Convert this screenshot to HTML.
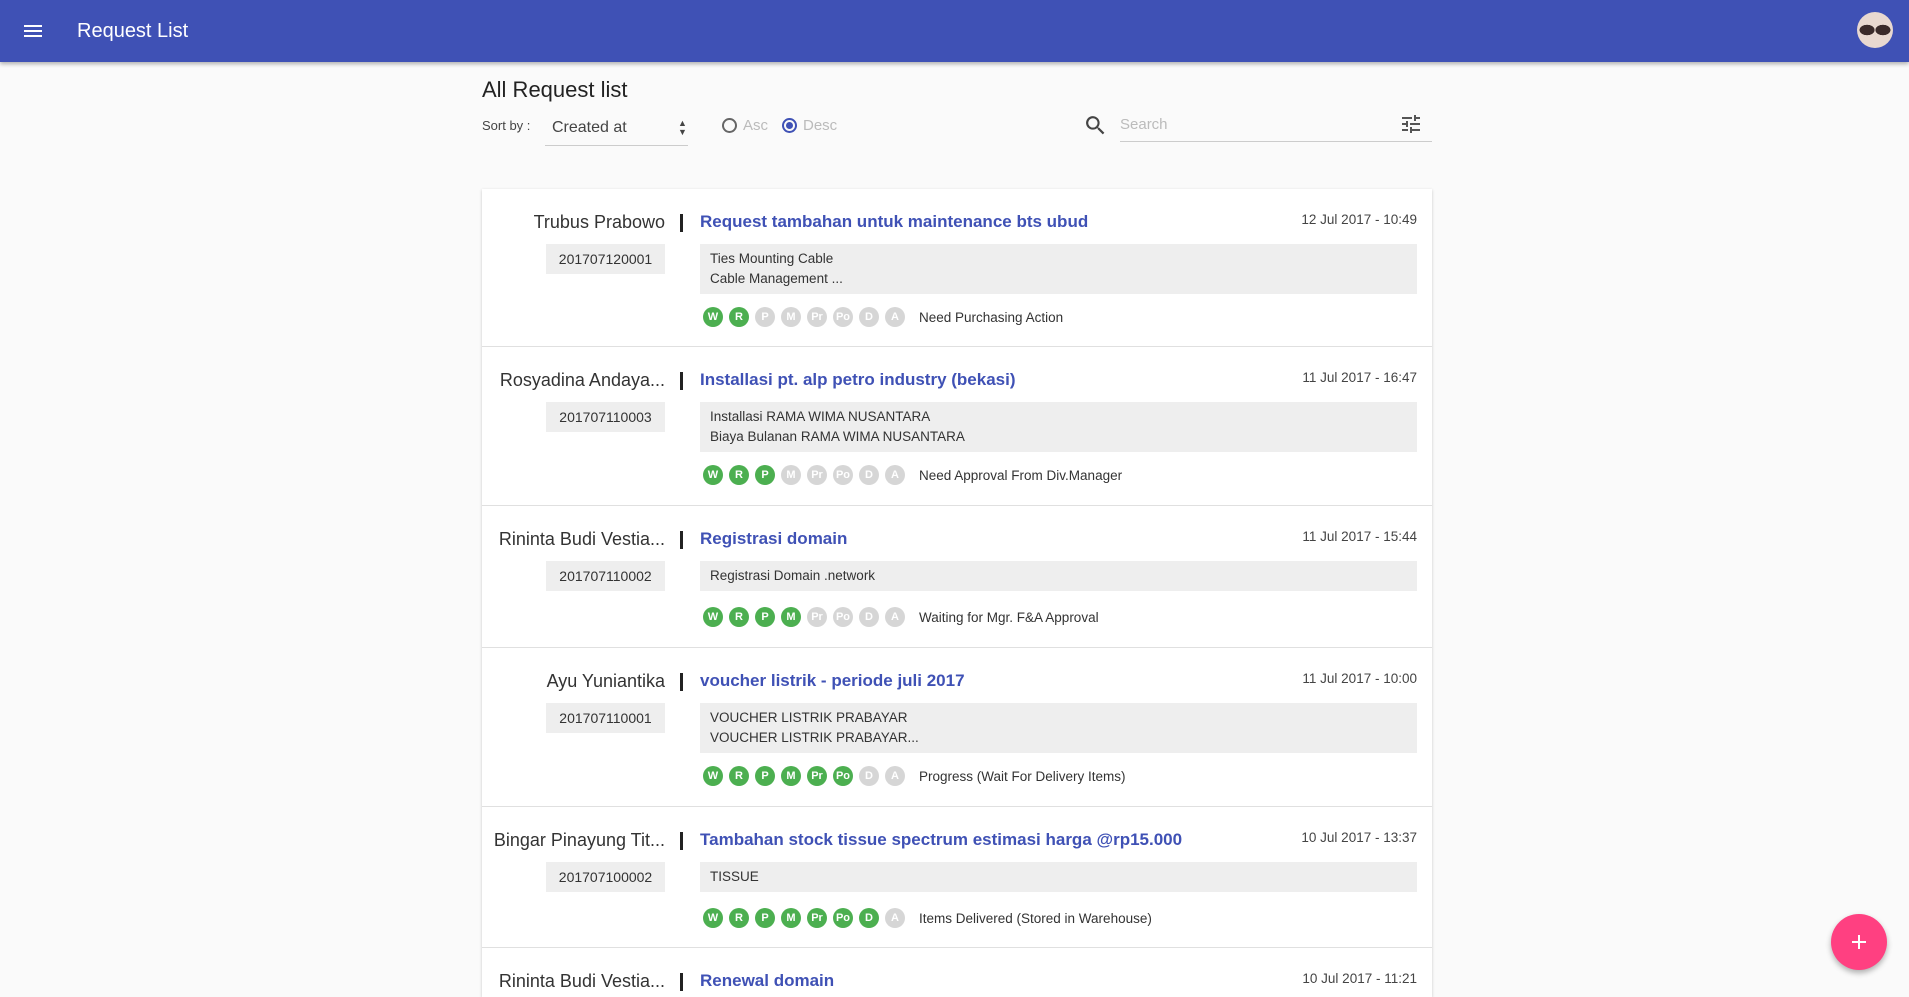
<!DOCTYPE html>
<html><head><meta charset="utf-8"><style>
*{box-sizing:border-box;margin:0;padding:0}
html{width:1909px;height:997px;overflow:hidden}
body{width:1909px;height:997px;overflow:hidden;background:#fafafa;font-family:"Liberation Sans",Arial,sans-serif;position:relative;color:#333}
.hdr{position:absolute;left:0;top:0;width:1909px;height:62px;background:#3f51b5;box-shadow:0 2px 4px rgba(0,0,0,.3)}
.hb{position:absolute;left:24px;height:2px;width:18px;background:#fff}
.ttl{position:absolute;left:77px;top:20px;color:#fff;font-size:20px}
.av{position:absolute;left:1857px;top:12px;width:36px;height:36px;border-radius:50%;background:radial-gradient(ellipse at 28% 50%,#3a2a2a 0 20%,transparent 21%),radial-gradient(ellipse at 72% 50%,#3a2a2a 0 20%,transparent 21%),#e8d8d0}
.abs{position:absolute}
.card{position:absolute;left:482px;top:189px;width:950px;height:808px;background:#fff;box-shadow:0 1px 3px rgba(0,0,0,.2)}
.row{position:absolute;left:0;width:950px;border-bottom:1px solid #e0e0e0}
.nm{position:absolute;right:767px;top:23px;font-size:18px;color:#333;white-space:nowrap}
.sep{position:absolute;left:198px;top:25px;width:3px;height:18px;background:#222}
.t{position:absolute;left:218px;top:23px;font-size:17px;font-weight:bold;color:#3f51b5;white-space:nowrap}
.dt{position:absolute;right:15px;top:23px;font-size:13.5px;color:#444}
.id{position:absolute;left:64px;top:55px;width:119px;height:30px;background:#eee;font-size:14px;text-align:center;line-height:30px;color:#333}
.ds{position:absolute;left:218px;top:55px;width:717px;background:#eee;font-size:13.5px;line-height:20px;padding:5px 10px;color:#333}
.cs{position:absolute;left:221px;display:flex;gap:6px;align-items:center}
.c{width:20px;height:20px;border-radius:50%;background:#d6d6d6;color:#fff;font-size:11px;font-weight:bold;text-align:center;line-height:20px}
.g{background:#4caf50}
.st{font-size:13.5px;color:#333;margin-left:8px;white-space:nowrap}
</style></head><body>
<div class="hdr">
<div class="hb" style="top:25px"></div><div class="hb" style="top:30px"></div><div class="hb" style="top:35px"></div>
<div class="ttl">Request List</div>
<div class="av"></div>
</div>
<div class="abs" style="left:482px;top:77px;font-size:22px;color:#222">All Request list</div>
<div class="abs" style="left:482px;top:118px;font-size:13px;color:#444">Sort by :</div>
<div class="abs" style="left:552px;top:119px;font-size:16px;color:#444">Created at</div>
<div class="abs" style="left:678px;top:119px;font-size:9px;line-height:9px;color:#444">▲<br>▼</div>
<div class="abs" style="left:545px;top:145px;width:143px;height:1px;background:#ccc"></div>
<div class="abs" style="left:722px;top:118px;width:15px;height:15px;border:2px solid #666;border-radius:50%"></div>
<div class="abs" style="left:743px;top:117px;font-size:15px;color:#bbb">Asc</div>
<div class="abs" style="left:782px;top:118px;width:15px;height:15px;border:2px solid #3f51b5;border-radius:50%"><div style="margin:2px;width:7px;height:7px;border-radius:50%;background:#3f51b5"></div></div>
<div class="abs" style="left:803px;top:117px;font-size:15px;color:#bbb">Desc</div>
<svg class="abs" style="left:1083px;top:113px" width="25" height="25" viewBox="0 0 24 24"><path fill="#444" d="M15.5 14h-.8l-.3-.3A6.5 6.5 0 1 0 9.5 16a6.5 6.5 0 0 0 4.2-1.6l.3.3v.8l5 5 1.5-1.5-5-5zm-6 0a4.5 4.5 0 1 1 0-9 4.5 4.5 0 0 1 0 9z"/></svg>
<div class="abs" style="left:1120px;top:116px;font-size:15px;color:#bbb">Search</div>
<div class="abs" style="left:1120px;top:141px;width:312px;height:1px;background:#ccc"></div>
<svg class="abs" style="left:1399px;top:112px" width="24" height="24" viewBox="0 0 24 24"><path fill="#555" d="M3 17v2h6v-2H3zM3 5v2h10V5H3zm10 16v-2h8v-2h-8v-2h-2v6h2zM7 9v2H3v2h4v2h2V9H7zm14 4v-2H11v2h10zm-6-4h2V7h4V5h-4V3h-2v6z"/></svg>

<div class="card">
<div class="row" style="top:0;height:158px">
<div class="nm">Trubus Prabowo</div><div class="sep"></div>
<div class="t">Request tambahan untuk maintenance bts ubud</div><div class="dt">12 Jul 2017 - 10:49</div>
<div class="id">201707120001</div>
<div class="ds">Ties Mounting Cable<br>Cable Management ...</div>
<div class="cs" style="top:118px"><div class="c g">W</div><div class="c g">R</div><div class="c">P</div><div class="c">M</div><div class="c">Pr</div><div class="c">Po</div><div class="c">D</div><div class="c">A</div><span class="st">Need Purchasing Action</span></div>
</div>
<div class="row" style="top:158px;height:159px">
<div class="nm">Rosyadina Andaya...</div><div class="sep"></div>
<div class="t">Installasi pt. alp petro industry (bekasi)</div><div class="dt">11 Jul 2017 - 16:47</div>
<div class="id">201707110003</div>
<div class="ds">Installasi RAMA WIMA NUSANTARA<br>Biaya Bulanan RAMA WIMA NUSANTARA</div>
<div class="cs" style="top:118px"><div class="c g">W</div><div class="c g">R</div><div class="c g">P</div><div class="c">M</div><div class="c">Pr</div><div class="c">Po</div><div class="c">D</div><div class="c">A</div><span class="st">Need Approval From Div.Manager</span></div>
</div>
<div class="row" style="top:317px;height:142px">
<div class="nm">Rininta Budi Vestia...</div><div class="sep"></div>
<div class="t">Registrasi domain</div><div class="dt">11 Jul 2017 - 15:44</div>
<div class="id">201707110002</div>
<div class="ds">Registrasi Domain .network</div>
<div class="cs" style="top:101px"><div class="c g">W</div><div class="c g">R</div><div class="c g">P</div><div class="c g">M</div><div class="c">Pr</div><div class="c">Po</div><div class="c">D</div><div class="c">A</div><span class="st">Waiting for Mgr. F&amp;A Approval</span></div>
</div>
<div class="row" style="top:459px;height:159px">
<div class="nm">Ayu Yuniantika</div><div class="sep"></div>
<div class="t">voucher listrik - periode juli 2017</div><div class="dt">11 Jul 2017 - 10:00</div>
<div class="id">201707110001</div>
<div class="ds">VOUCHER LISTRIK PRABAYAR<br>VOUCHER LISTRIK PRABAYAR...</div>
<div class="cs" style="top:118px"><div class="c g">W</div><div class="c g">R</div><div class="c g">P</div><div class="c g">M</div><div class="c g">Pr</div><div class="c g">Po</div><div class="c">D</div><div class="c">A</div><span class="st">Progress (Wait For Delivery Items)</span></div>
</div>
<div class="row" style="top:618px;height:141px">
<div class="nm">Bingar Pinayung Tit...</div><div class="sep"></div>
<div class="t">Tambahan stock tissue spectrum estimasi harga @rp15.000</div><div class="dt">10 Jul 2017 - 13:37</div>
<div class="id">201707100002</div>
<div class="ds">TISSUE</div>
<div class="cs" style="top:101px"><div class="c g">W</div><div class="c g">R</div><div class="c g">P</div><div class="c g">M</div><div class="c g">Pr</div><div class="c g">Po</div><div class="c g">D</div><div class="c">A</div><span class="st">Items Delivered (Stored in Warehouse)</span></div>
</div>
<div class="row" style="top:759px;height:49px;border:none">
<div class="nm">Rininta Budi Vestia...</div><div class="sep"></div>
<div class="t">Renewal domain</div><div class="dt">10 Jul 2017 - 11:21</div>
</div>
</div>
<div class="abs" style="left:1831px;top:914px;width:56px;height:56px;border-radius:50%;background:#ff4081;box-shadow:0 3px 6px rgba(0,0,0,.3)">
<div class="abs" style="left:21px;top:27px;width:14px;height:2px;background:#fff"></div>
<div class="abs" style="left:27px;top:21px;width:2px;height:14px;background:#fff"></div>
</div>
</body></html>
